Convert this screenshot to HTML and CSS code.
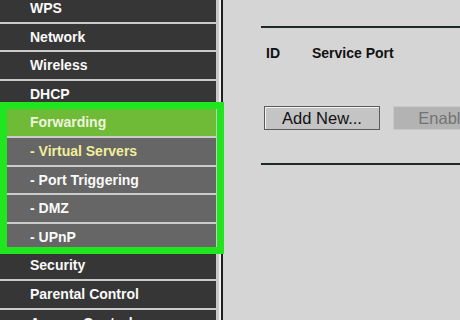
FILE: index.html
```html
<!DOCTYPE html>
<html lang="en">
<head>
    <!-- Conjunto de caracteres e escala -->
    <meta charset="UTF-8">
    <meta name="viewport" content="width=device-width, initial-scale=1.0">
    <title>Virtual Servers</title>
    <!-- Estilos da página -->
    <link rel="stylesheet" href="styles.css">
</head>
<body>
    <div class="page">
        <!-- Menu lateral do roteador -->
        <ul class="menu">
            <li class="menu-item">WPS</li>
            <li class="menu-item">Network</li>
            <li class="menu-item">Wireless</li>
            <li class="menu-item">DHCP</li>
            <li class="menu-item selected">Forwarding</li>
            <li class="menu-item sub active">- Virtual Servers</li>
            <li class="menu-item sub">- Port Triggering</li>
            <li class="menu-item sub">- DMZ</li>
            <li class="menu-item sub">- UPnP</li>
            <li class="menu-item">Security</li>
            <li class="menu-item">Parental Control</li>
            <li class="menu-item">Access Control</li>
        </ul>

        <!-- Faixa entre o menu e o conteúdo -->
        <div class="rail"></div>

        <!-- Área de conteúdo -->
        <div class="content">
            <div class="rule"></div>
            <div class="table-head">
                <span class="col-id">ID</span>
                <span>Service Port</span>
            </div>
            <div class="buttons">
                <button type="button" class="btn">Add New...</button>
                <button type="button" class="btn disabled">Enable All</button>
            </div>
            <div class="rule rule-bottom"></div>
        </div>

        <!-- Destaque verde sobre o grupo Forwarding -->
        <div class="highlight"></div>
    </div>
</body>
</html>
```

FILE: styles.css
```css
/* Corpo da página */
body {
    margin: 0;
    background-color: #d5d5d5;
    font-family: 'Liberation Sans', Arial, sans-serif;
    overflow: hidden;
}

/* Container principal */
.page {
    position: relative;
    display: flex;
    height: 320px;
    overflow: hidden;
}

/* Menu lateral */
.menu {
    list-style: none;
    margin: -5px 0 0 0;
    padding: 0;
    width: 216px;
    flex-shrink: 0;
    align-self: flex-start;
}

.menu-item {
    height: 26.6px;
    line-height: 26.6px;
    padding-left: 30px;
    background-color: #363636;
    border-bottom: 2px solid #cbcbcb;
    color: #fafafa;
    font-size: 14px;
    font-weight: bold;
    white-space: nowrap;
}

/* Item selecionado (verde) */
.menu-item.selected {
    background-color: #6fbb37;
    color: #eef3dc;
}

/* Subitens do menu */
.menu-item.sub {
    background-color: #666666;
}

.menu-item.active {
    color: #f0f09a;
}

/* Faixa clara entre menu e conteúdo */
.rail {
    width: 3px;
    flex-shrink: 0;
    background-color: #c9c9c9;
    border-right: 2px solid #efefef;
}

/* Conteúdo */
.content {
    flex: 1;
    border-left: 2px solid #1f1f1f;
    padding: 26px 0 0 38px;
    background-color: #d5d5d5;
    overflow: hidden;
}

.rule {
    height: 2px;
    background-color: #1d2b27;
}

.table-head {
    display: flex;
    gap: 32px;
    margin: 16px 0 0 5px;
    line-height: 18px;
    font-size: 14px;
    font-weight: bold;
    color: #111;
}

.buttons {
    display: flex;
    gap: 13px;
    margin: 44px 0 0 3px;
}

/* Botões do formulário */
.btn {
    flex-shrink: 0;
    width: 116px;
    height: 24px;
    padding: 0;
    background-color: #c4c4c4;
    border: 1px solid #5c5c5c;
    box-shadow: inset 1px 1px 0 #f2f2f2;
    font-family: 'Liberation Sans', Arial, sans-serif;
    font-size: 16.5px;
    color: #111;
}

.btn.disabled {
    width: 124px;
    background-color: #b3b3b3;
    border-color: #c8c8c8;
    box-shadow: none;
    color: #737373;
}

.rule-bottom {
    margin-top: 33px;
}

/* Moldura verde de destaque */
.highlight {
    position: absolute;
    left: 0;
    top: 102px;
    width: 224px;
    height: 152px;
    box-sizing: border-box;
    border: 7px solid #1fe61f;
}
```
